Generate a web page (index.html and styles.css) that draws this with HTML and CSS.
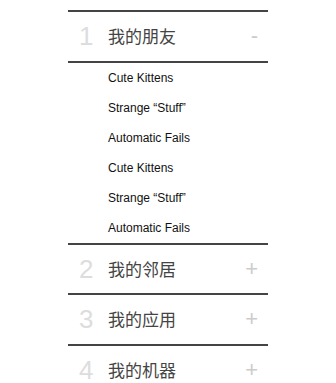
FILE: index.html
```html
<!DOCTYPE html>
<html lang="zh-CN">
<head>
    <meta charset="UTF-8">
    <meta name="viewport" content="width=device-width, initial-scale=1.0">
    <title>手风琴菜单</title>
    <link rel="stylesheet" href="styles.css">
</head>
<body>
    <div class="menu">
        <div class="section open">
            <div class="head">
                <span class="num">1</span>
                <span class="title">我的朋友</span>
                <span class="sign">-</span>
            </div>
            <ul class="sub">
                <li>Cute Kittens</li>
                <li>Strange “Stuff”</li>
                <li>Automatic Fails</li>
                <li>Cute Kittens</li>
                <li>Strange “Stuff”</li>
                <li>Automatic Fails</li>
            </ul>
        </div>
        <div class="section">
            <div class="head">
                <span class="num">2</span>
                <span class="title">我的邻居</span>
                <span class="sign">+</span>
            </div>
        </div>
        <div class="section">
            <div class="head">
                <span class="num">3</span>
                <span class="title">我的应用</span>
                <span class="sign">+</span>
            </div>
        </div>
        <div class="section">
            <div class="head">
                <span class="num">4</span>
                <span class="title">我的机器</span>
                <span class="sign">+</span>
            </div>
        </div>
    </div>
</body>
</html>
```

FILE: styles.css
```css
body {
    margin: 0;
    background: #fff;
    font-family: "Liberation Sans", Arial, "Noto Sans CJK SC", sans-serif;
}
.menu {
    width: 200px;
    margin: 10px 0 0 68px;
}
.head {
    display: flex;
    align-items: center;
    height: 48.5px;
    padding: 0 10px 0 11px;
    border-top: 2px solid #444;
    line-height: 22px;
}
.num {
    width: 29px;
    font-size: 26px;
    color: #ddd;
}
.title {
    flex: 1;
    font-family: "Noto Sans CJK SC", sans-serif;
    font-size: 17px;
    color: #444;
}
.sign {
    font-size: 22px;
    color: #ccc;
}
.sub {
    list-style: none;
    margin: 0;
    padding: 0;
    border-top: 2px solid #444;
}
.sub li {
    height: 30px;
    line-height: 30px;
    padding-left: 40px;
    font-size: 12px;
    color: #111;
}
```
